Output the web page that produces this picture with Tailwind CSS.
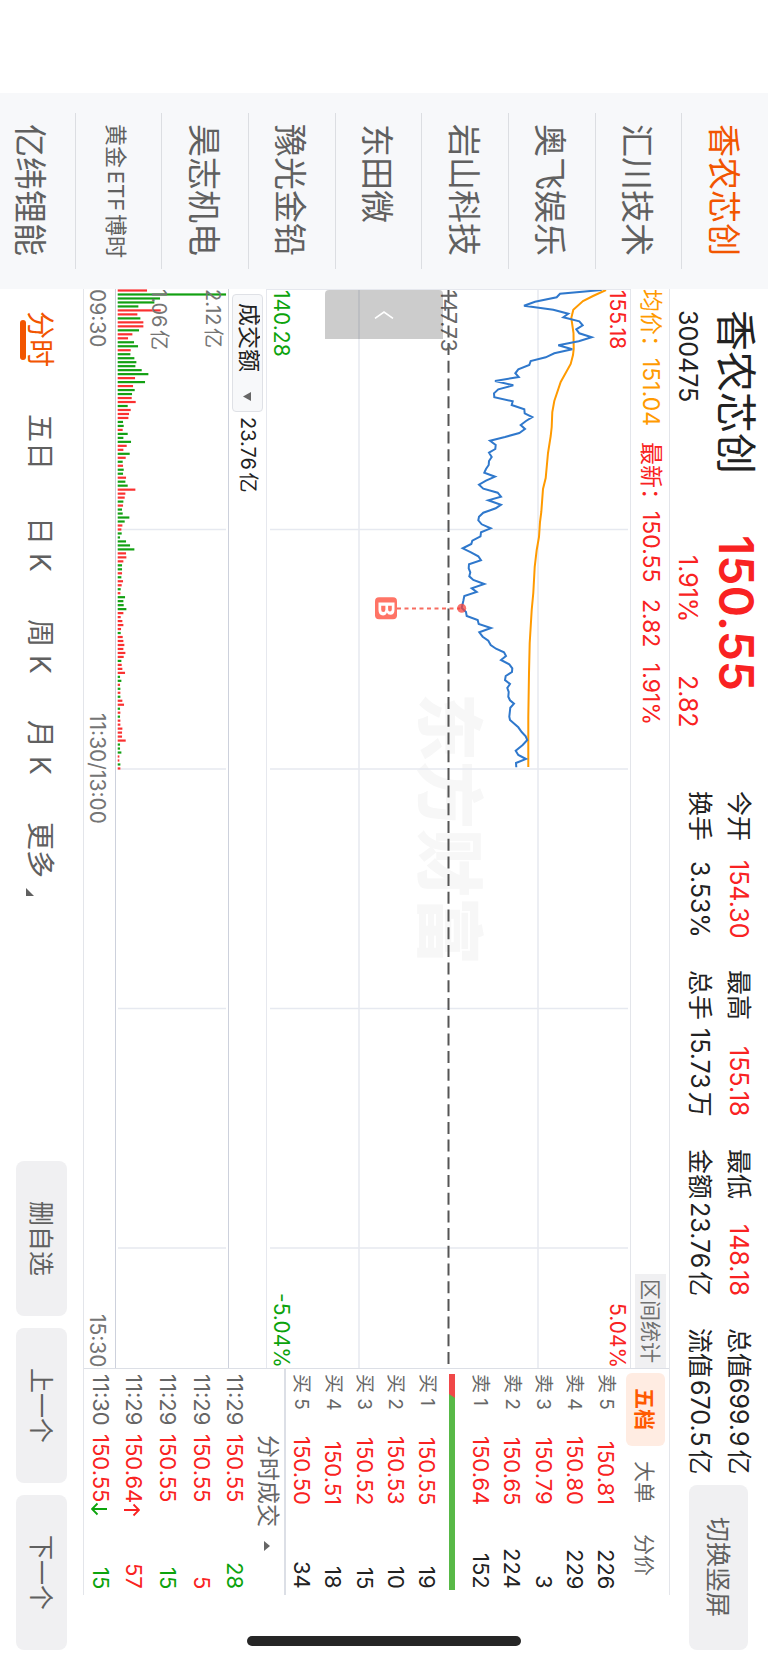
<!DOCTYPE html>
<html lang="zh-CN">
<head>
    <meta charset="utf-8">
    <meta name="viewport" content="width=device-width, initial-scale=1">
    <title>香农芯创 300475</title>
    <script src="https://cdn.jsdelivr.net/npm/@tailwindcss/browser@4"></script>
</head>
<body class="bg-white">
<!-- landscape page: the inline axis runs top to bottom, blocks stack right to left -->
<div class="relative flex h-screen w-full overflow-hidden pt-[93px] font-['Inter','Noto_Sans_CJK_SC',sans-serif] leading-none text-[#222] [writing-mode:vertical-rl] [text-orientation:sideways] [text-autospace:normal] whitespace-nowrap">

    <!-- watch list -->
    <nav class="h-[196px] shrink-0 overflow-hidden bg-[#f7f8fa] pt-5 pb-5 flex flex-col text-[#606060]">
        <ul class="-ml-[11px] flex flex-1 flex-col text-[33px]">
            <li class="flex flex-1 items-center justify-center border-l border-[#dcdee2] pr-1 text-[#f25500]"><a href="#" class="h-[134px]">香农芯创</a></li>
            <li class="flex flex-1 items-center justify-center border-l border-[#dcdee2] pr-1"><a href="#" class="h-[134px]">汇川技术</a></li>
            <li class="flex flex-1 items-center justify-center border-l border-[#dcdee2] pr-1"><a href="#" class="h-[134px]">奥飞娱乐</a></li>
            <li class="flex flex-1 items-center justify-center border-l border-[#dcdee2] pr-1"><a href="#" class="h-[134px]">岩山科技</a></li>
            <li class="flex flex-1 items-center justify-center border-l border-[#dcdee2] pr-1"><a href="#" class="h-[134px]">东田微</a></li>
            <li class="flex flex-1 items-center justify-center border-l border-[#dcdee2] pr-1"><a href="#" class="h-[134px]">豫光金铅</a></li>
            <li class="flex flex-1 items-center justify-center border-l border-[#dcdee2] pr-1"><a href="#" class="h-[134px]">昊志机电</a></li>
            <li class="flex flex-1 items-center justify-center border-l border-[#dcdee2] pr-1"><a href="#" class="h-[134px] text-[22px]">黄金ETF博时</a></li>
            <li class="flex flex-1 items-center justify-center pr-1"><a href="#" class="h-[134px]">亿纬锂能</a></li>
        </ul>
    </nav>

    <main class="flex min-h-0 flex-1 flex-col">
        <!-- quote header -->
        <header class="flex w-[98px] shrink-0 pt-[21px] pb-[13px]">
            <div class="flex h-[225px] flex-col gap-3 pr-2">
                <h1 class="text-[41px] leading-[48px]">香农芯创</h1>
                <p class="text-[25px]">300475</p>
            </div>
            <div class="flex h-[256px] flex-col gap-3 pr-2 text-[#f92222]">
                <p class="text-[48px] leading-[48px] font-semibold">150.55</p>
                <div class="flex pt-[20px] text-[25px]">
                    <span class="h-[120px]">1.91%</span>
                    <span>2.82</span>
                </div>
            </div>
            <dl class="grid flex-1 grid-cols-4 content-start gap-x-8 pr-[10px] text-[25px] leading-[39px]">
                <div class="flex justify-between"><dt>今开</dt><dd class="text-[#f92222]">154.30</dd></div>
                <div class="flex justify-between"><dt>最高</dt><dd class="text-[#f92222]">155.18</dd></div>
                <div class="flex justify-between"><dt>最低</dt><dd class="text-[#f92222]">148.18</dd></div>
                <div class="flex justify-between"><dt>总值</dt><dd>699.9亿</dd></div>
                <div class="flex justify-between"><dt>换手</dt><dd>3.53%</dd></div>
                <div class="flex justify-between"><dt>总手</dt><dd>15.73万</dd></div>
                <div class="flex justify-between"><dt>金额</dt><dd>23.76亿</dd></div>
                <div class="flex justify-between"><dt>流值</dt><dd>670.5亿</dd></div>
            </dl>
            <button type="button" class="mt-[10px] mr-5 flex h-[165px] w-[59px] items-center justify-center rounded-lg bg-[#f0f0f2] pr-[3px] text-[25px] text-[#606060]">切换竖屏</button>
        </header>

        <section class="mb-[68px] flex min-w-0 flex-1 border-r border-l border-[#e3e5ea]">
            <div class="flex flex-1 flex-col">
                <!-- average / last -->
                <div class="flex w-[39px] shrink-0 items-center justify-between border-l border-[#e3e5ea] text-[23px]">
                    <div class="flex gap-4 text-[#f92222]">
                        <span class="text-[#ff9a00]">均价：151.04</span>
                        <span>最新：150.55</span>
                        <span>2.82</span>
                        <span>1.91%</span>
                    </div>
                    <button type="button" class="flex h-[94px] w-[31px] items-center justify-center bg-[#f0f0f2] text-[21px] text-[#707070]">区间统计</button>
                </div>

                <!-- price chart -->
                <div class="relative min-w-0 flex-1 border-t border-l border-[#e6e8ee] text-[21px]">
                    <span class="absolute inset-0 flex items-center justify-center pt-[2px] text-[68px] font-black text-[#f7f7f7]"><span class="block h-[274px]">东方财富</span></span>
                    <svg class="absolute inset-0 h-full w-full" viewBox="267 290 363 1078" preserveAspectRatio="none" fill="none">
                        <g stroke="#e6e9f0" stroke-width="1.5">
                            <path d="M359 290V1368M538 290V1368"/>
                            <path d="M270 529.5H628M270 769H628M270 1008.5H628M270 1248H628"/>
                        </g>
                        <path d="M448.500 290V1368" stroke="#555" stroke-width="2" stroke-dasharray="12 5.7"/>
                        <polyline stroke="#ff9a00" stroke-width="2" points="606,290 593,296 583,301 573.3,309.7 571.3,318 573.5,333 573.7,349 573,355 570.7,364 560.7,382 554.3,401 552.3,412 551.7,427 550.7,436 548,453 545.7,478 543,489 541.3,512 540,522 539,537 536.7,550 534.7,567 533.3,593 531.7,610 529.7,643 529,673 528.3,717 528.3,767"/>
                        <polyline stroke="#2f78cc" stroke-width="2" points="601.7,290 560,293.7 556.7,297.3 535,301.7 524,305.7 553.3,309.7 568.3,313.7 563.3,317.3 579.3,321.3 582.7,325.3 576.3,329.3 579.3,333.3 591.7,337.3 578.7,341.3 558.3,345.3 572.3,349.3 554.3,353.3 545.7,357.3 530.7,361 529.3,365 518.3,369.3 515.3,373.3 518.7,377 495,381 513.3,385.3 498.3,389.3 494,393.3 494.3,397.3 512.7,401.3 511.7,405 524.3,409.3 524.7,413.3 532.3,417 526,421 520.7,425 525,429 519.3,433 505,437 490,440.7 495.7,445 495.3,449 489,452.7 491.7,457 489,461 488.7,465 486,469 484.3,472.7 495,476.7 486,480.7 479,484.7 483.3,488.7 497.7,492.7 501,496.7 488.3,500.3 501,504.7 495.7,508.3 483.3,512.7 479,516.7 478.3,520.3 481.7,524.3 490.7,528.3 481,532.3 480.5,536.3 472.3,540.7 471.3,544 462.7,548.3 471,552.3 478.3,556.3 481,560.3 469,564.3 468.7,568.3 470.3,572.3 469.3,576.3 473.3,580 484.3,584 471.7,588.3 476.7,592 464.3,596 463.3,601 461.7,608 466,612 466.7,616 477.7,620 478.7,624 491,628 479.3,632.3 482.7,636.7 488.3,640.7 490.7,645 496,648.7 504,652.3 506,656 501,660 509.3,664.3 512.3,668.3 512,672 505.7,676 505,680 510,684 507.3,688 508.7,692 508.3,696.7 510,700.3 514,703.7 510.3,707.7 509.3,716.7 510,720 518.3,727.3 521.7,732 525.7,736.3 527.3,740 522.7,745 515.7,750.7 518.3,755 526,759 516,763 516.3,767.3"/>
                        <path d="M397 608.5H460" stroke="#f76c60" stroke-width="2" stroke-dasharray="4 3.5"/>
                        <circle cx="461.7" cy="608.3" r="4.5" fill="#f4433c" fill-opacity=".75"/>
                        <rect x="375" y="597.3" width="22" height="22" rx="4" fill="#ff7466"/>
                        <path d="M378.5 602.5H394.5V609.5Q394.5 614.8 390.4 614.8Q387.6 614.8 386.9 612.5Q386 615.4 383 615.4Q378.5 615.4 378.5 609.8ZM381.2 605.8V609.5Q381.2 612 383.3 612Q385.4 612 385.4 609.5V605.8ZM388.1 605.8V609.3Q388.1 611.5 389.9 611.5Q391.8 611.5 391.8 609.3V605.8Z" fill="#fff" fill-rule="evenodd"/>
                    </svg>
                    <div class="absolute top-0 right-[2px] bottom-0 flex justify-between text-[#f92222]"><span>155.18</span><span>5.04%</span></div>
                    <div class="absolute top-0 bottom-0 left-[4px] flex justify-between text-[#0ca30c]"><span>140.28</span><span>-5.04%</span></div>
                    <span class="absolute top-0 right-[171px] text-[#666]">147.73</span>
                    <button type="button" aria-label="收起" class="absolute top-0 left-[58px] flex h-[49px] w-[118px] items-center justify-center rounded-t bg-black/20">
                        <svg class="h-2 w-5" viewBox="0 0 20 8" fill="none" stroke="#fff" stroke-width="1.6"><path d="M1 7.400L10 1L19 7.400"/></svg>
                    </button>
                </div>

                <!-- indicator -->
                <div class="flex w-[38px] shrink-0 items-center gap-[5px] border-l border-[#cdd1dc] pt-[5px] text-[23px]">
                    <div class="relative flex">
                        <select aria-label="指标" class="h-[118px] w-[31px] appearance-none rounded border border-[#dfe1e6] bg-[#f7f8fa] pt-[8px] pr-[2px] pl-0 text-[#222]">
                            <option>成交额</option>
                            <option>成交量</option>
                        </select>
                        <svg class="pointer-events-none absolute bottom-[11px] left-[11px] h-[9px] w-[8px]" viewBox="0 0 8 9" fill="#666"><path d="M0 4.500L8 0V9Z"/></svg>
                    </div>
                    <span class="text-[20px]">23.76亿</span>
                </div>

                <!-- turnover bars -->
                <div class="relative w-[113px] shrink-0 border-l border-[#cdd1dc] text-[20px] text-[#757575]">
                    <svg class="absolute inset-0 h-full w-full" viewBox="0 0 112 1079" preserveAspectRatio="none">
                        <path d="M2 240.500H110M2 480H110M2 719.500H110M2 959H110" stroke="#e6e9f0" stroke-width="1.5"/>
                        <g id="bars"></g>
                    </svg>
                    <span class="absolute top-0 left-[87px]">2.12亿</span>
                    <span class="absolute top-0 left-[33px]">1.06亿</span>
                </div>

                <!-- time axis -->
                <div class="grid w-[31px] flex-none grid-cols-[3fr_2fr_4fr] items-center pr-1 text-[21px] text-[#757575]">
                    <span>09:30</span>
                    <span class="text-center">11:30/13:00</span>
                    <span class="text-end">15:30</span>
                </div>
            </div>

            <!-- order book -->
            <aside class="flex h-[227px] shrink-0 flex-col border-t border-[#dcdfe6] text-[22px]">
                <div class="flex w-[47px] items-center pt-1 pb-1 text-[21px] text-[#666]">
                    <button type="button" class="flex w-[39px] flex-1 items-center justify-center rounded-md bg-[#ffece2] pr-[3px] font-bold text-[#ff5a00]">五档</button>
                    <button type="button" class="flex w-[39px] flex-1 items-center justify-center pr-[3px]">大单</button>
                    <button type="button" class="flex w-[39px] flex-1 items-center justify-center pr-[3px]">分价</button>
                </div>
                <table class="mt-[5px] mb-[6px] w-[157px] table-fixed">
                    <tr><th class="h-[60px] text-start text-[19px] font-normal text-[#666]">卖 5</th><td class="h-[71px] text-end text-[#f92222]">150.81</td><td class="text-end">226</td></tr>
                    <tr><th class="text-start text-[19px] font-normal text-[#666]">卖 4</th><td class="text-end text-[#f92222]">150.80</td><td class="text-end">229</td></tr>
                    <tr><th class="text-start text-[19px] font-normal text-[#666]">卖 3</th><td class="text-end text-[#f92222]">150.79</td><td class="text-end">3</td></tr>
                    <tr><th class="text-start text-[19px] font-normal text-[#666]">卖 2</th><td class="text-end text-[#f92222]">150.65</td><td class="text-end">224</td></tr>
                    <tr><th class="text-start text-[19px] font-normal text-[#666]">卖 1</th><td class="text-end text-[#f92222]">150.64</td><td class="text-end">152</td></tr>
                </table>
                <svg class="mt-[5px] mr-[10px] mb-[5px] ml-[6px] h-[216px] w-[6px] flex-none" viewBox="0 0 6 216" preserveAspectRatio="none">
                    <path d="M0 0H6V216H0Z" fill="#58b947"/>
                    <path d="M0 0H6V24L0 20Z" fill="#f04848"/>
                </svg>
                <table class="mt-[5px] mb-[6px] w-[157px] table-fixed">
                    <tr><th class="h-[60px] text-start text-[19px] font-normal text-[#666]">买 1</th><td class="h-[71px] text-end text-[#f92222]">150.55</td><td class="text-end">19</td></tr>
                    <tr><th class="text-start text-[19px] font-normal text-[#666]">买 2</th><td class="text-end text-[#f92222]">150.53</td><td class="text-end">10</td></tr>
                    <tr><th class="text-start text-[19px] font-normal text-[#666]">买 3</th><td class="text-end text-[#f92222]">150.52</td><td class="text-end">15</td></tr>
                    <tr><th class="text-start text-[19px] font-normal text-[#666]">买 4</th><td class="text-end text-[#f92222]">150.51</td><td class="text-end">18</td></tr>
                    <tr><th class="text-start text-[19px] font-normal text-[#666]">买 5</th><td class="text-end text-[#f92222]">150.50</td><td class="text-end">34</td></tr>
                </table>
                <button type="button" class="flex w-[34px] items-center gap-[14px] border-r-2 border-[#dcdfe6] pt-[66px] pr-[2px] text-[23px] text-[#666]">分时成交
                    <svg class="h-[10px] w-[6px]" viewBox="0 0 6 10" fill="#666"><path d="M0 0L6 5L0 10Z"/></svg>
                </button>
                <table class="mt-[5px] mb-[6px] min-w-0 flex-1 table-fixed text-[#f92222]">
                    <tr><td class="h-[60px] text-[#666]">11:29</td><td class="h-[85px]">150.55</td><td class="text-end text-[#0ca30c]">28</td></tr>
                    <tr><td class="text-[#666]">11:29</td><td>150.55</td><td class="text-end">5</td></tr>
                    <tr><td class="text-[#666]">11:29</td><td>150.55</td><td class="text-end text-[#0ca30c]">15</td></tr>
                    <tr><td class="text-[#666]">11:29</td><td>150.64<svg class="inline-block h-[14px] w-[16px]" viewBox="0 0 16 14" fill="none" stroke="currentColor" stroke-width="1.8"><path d="M0 7H15M9.500 1.500L15 7L9.500 12.500"/></svg></td><td class="text-end">57</td></tr>
                    <tr><td class="text-[#666]">11:30</td><td>150.55<svg class="inline-block h-[14px] w-[16px] text-[#0ca30c]" viewBox="0 0 16 14" fill="none" stroke="currentColor" stroke-width="1.8"><path d="M16 7H1M6.500 1.500L1 7L6.500 12.500"/></svg></td><td class="text-end text-[#0ca30c]">15</td></tr>
                </table>
            </aside>
        </section>

        <!-- period tabs and actions -->
        <footer class="flex w-[83px] shrink-0 items-center justify-between pt-[22px] pb-[13px] text-[#606060]">
            <div class="flex gap-[47px] pr-1 text-[28px]">
                <a href="#" class="relative text-[#f25500]">分时<span class="absolute top-[9px] -left-[6px] h-[40px] w-[6px] rounded-full bg-[#f25500]"></span></a>
                <a href="#">五日</a>
                <a href="#">日 K</a>
                <a href="#">周 K</a>
                <a href="#">月 K</a>
                <a href="#" class="relative">更多<svg class="absolute -bottom-[18px] left-0 h-[8px] w-[8px]" viewBox="0 0 8 8" fill="#606060"><path d="M0 0L8 8H0Z"/></svg></a>
            </div>
            <div class="flex gap-3 text-[25px]">
                <button type="button" class="flex h-[155px] w-[51px] items-center justify-center rounded-lg bg-[#f0f0f2] pr-[3px]">删自选</button>
                <button type="button" class="flex h-[155px] w-[51px] items-center justify-center rounded-lg bg-[#f0f0f2] pr-[3px]">上一个</button>
                <button type="button" class="flex h-[155px] w-[51px] items-center justify-center rounded-lg bg-[#f0f0f2] pr-[3px]">下一个</button>
            </div>
        </footer>
    </main>

    <!-- home indicator -->
    <div class="absolute bottom-[17px] left-1/2 h-[10px] w-[274px] -translate-x-1/2 rounded-full bg-[#262626]"></div>
</div>

<script>
    // one bar per minute, r = up, g = down
    const turnover = "r88 g325 g127 g110 g62 r129 r59 g68 r77 r77 g64 r44 r31 g49 g61 r39 g38 g50 g56 g53 g72 g92 r52 g82 r46 g51 g43 r42 r54 g30 r39 r34 r32 g16 g18 r15 g30 g17 g40 r27 r17 g36 r24 g15 r16 g18 g16 r25 g23 g30 r53 r23 r21 g17 r16 g13 g15 g35 g21 r14 r11 g12 g7 g25 g37 g50 r25 r26 r17 g13 g13 r13 g11 r16 r12 g9 r8 g22 g17 g18 g26 r17 r9 r14 r17 r10 g9 r15 r17 r20 r17 r23 r18 g11 r12 r14 r22 g7 g11 r7 g8 r8 g8 r14 r19 g7 r8 g7 r8 r8 r14 r13 r13 r24 g7 g7 g11 r5 r5 g8 r8".split(" ");
    const bars = document.getElementById("bars");
    turnover.forEach((item, i) => {
        const bar = document.createElementNS("http://www.w3.org/2000/svg", "rect");
        bar.setAttribute("x", 1.7);
        bar.setAttribute("y", 0.4 + i * 3.983);
        bar.setAttribute("width", item.slice(1) / 3);
        bar.setAttribute("height", 2.2);
        bar.setAttribute("fill", item[0] == "r" ? "#fa3030" : "#12a012");
        bars.appendChild(bar);
    });
</script>
</body>
</html>
